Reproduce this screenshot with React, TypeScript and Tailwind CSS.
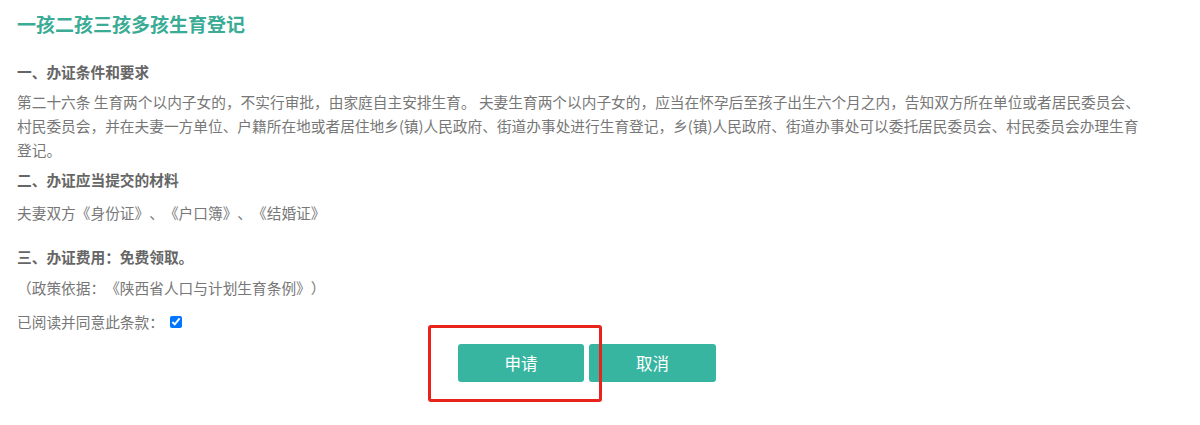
export default function App() {
  return (
    <div
      className="relative w-[1200px] h-[425px] bg-white overflow-hidden [text-spacing-trim:space-all]"
      style={{ fontFamily: '"Noto Sans CJK SC", "Noto Sans", sans-serif' }}
    >
      <div className="ml-[17px] w-[1140px] pt-[10px]">
        <h1 className="text-[19px] leading-[28px] font-bold text-[#3aab94]">
          一孩二孩三孩多孩生育登记
        </h1>

        <h3 className="mt-[22px] text-[14.7px] leading-[24px] font-bold text-[#666]">
          一、办证条件和要求
        </h3>
        <p className="mt-[6px] text-[14.7px] leading-[24px] text-[#777] whitespace-nowrap">
          第二十六条 生育两个以内子女的，不实行审批，由家庭自主安排生育。 夫妻生育两个以内子女的，应当在怀孕后至孩子出生六个月之内，告知双方所在单位或者居民委员会、
          <br />
          村民委员会，并在夫妻一方单位、户籍所在地或者居住地乡(镇)人民政府、街道办事处进行生育登记，乡(镇)人民政府、街道办事处可以委托居民委员会、村民委员会办理生育
          <br />
          登记。
        </p>

        <h3 className="mt-[6px] text-[14.7px] leading-[24px] font-bold text-[#666]">
          二、办证应当提交的材料
        </h3>
        <p className="mt-[9px] text-[14.7px] leading-[24px] text-[#777]">
          夫妻双方《身份证》、《户口簿》、《结婚证》
        </p>

        <h3 className="mt-[20px] text-[14.7px] leading-[24px] font-bold text-[#666]">
          三、办证费用：免费领取。
        </h3>
        <p className="mt-[7px] text-[14.7px] leading-[24px] text-[#777]">
          （政策依据：《陕西省人口与计划生育条例》）
        </p>

        <label className="mt-[10px] flex items-center gap-[6px] text-[14.7px] leading-[24px] text-[#777]">
          已阅读并同意此条款：
          <input type="checkbox" defaultChecked className="w-[12px] h-[12px]" />
        </label>

        <div className="mt-[10px] flex justify-center gap-[5px]">
          <button className="w-[126px] h-[38px] rounded-[3px] bg-[#37b5a0] text-white text-[16.5px]">
            申请
          </button>
          <button className="w-[127px] h-[38px] rounded-[3px] bg-[#37b5a0] text-white text-[16.5px]">
            取消
          </button>
        </div>
      </div>

      <div className="absolute left-[428px] top-[325px] w-[174px] h-[77px] border-[3px] border-[#e8231b] rounded-[3px] pointer-events-none" />
    </div>
  );
}
